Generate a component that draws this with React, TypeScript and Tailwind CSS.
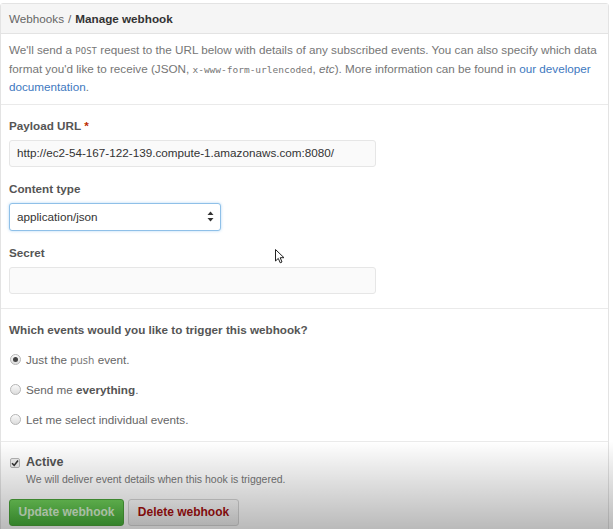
import React from "react";

function Radio({ checked }: { checked?: boolean }) {
  return (
    <span className="w-[11px] h-[11px] rounded-full border border-[#b5b5b5] bg-gradient-to-b from-[#fafafa] to-[#dcdcdc] flex items-center justify-center shrink-0">
      {checked && <span className="w-[5px] h-[5px] rounded-full bg-[#444]" />}
    </span>
  );
}

export default function App() {
  return (
    <div className="relative w-[613px] h-[529px] overflow-hidden bg-white font-['Liberation_Sans',Arial,sans-serif] text-[11.7px] text-[#333]">
      <div className="mt-[3px] w-[609px] border border-[#e3e3e3] rounded-[3px]">
        {/* Header */}
        <div className="h-[30px] flex items-center px-[8px] bg-[#f5f5f5] border-b border-[#e3e3e3]">
          <span className="text-[#666]">Webhooks</span>
          <span className="text-[#666] mx-[4px]">/</span>
          <span className="font-bold text-[#333]">Manage webhook</span>
        </div>

        {/* Intro */}
        <p className="px-[8px] pt-[7px] pb-[7px] leading-[18.5px] text-[#767676] border-b border-[#eaeaea]">
          We'll send a <code className="font-['DejaVu_Sans_Mono',monospace] text-[9px] leading-none uppercase">post</code> request
          to the URL below with details of any subscribed events. You can also specify which data format you'd like to receive
          (JSON, <code className="font-['DejaVu_Sans_Mono',monospace] text-[9.5px] leading-none">x-www-form-urlencoded</code>,{" "}
          <em>etc</em>). More information can be found in <span className="text-[#4078c0]">our developer documentation</span>.
        </p>

        {/* Form */}
        <div className="px-[8px] pt-[12px] pb-[14px] border-b border-[#eaeaea] flex flex-col">
          <label className="font-bold text-[#555] leading-[18px]">
            Payload URL <span className="text-[#bd2c00]">*</span>
          </label>
          <div className="mt-[5px] w-[367px] h-[27px] flex items-center px-[7px] bg-[#fafafa] border border-[#e6e6e6] rounded-[3px] text-[#333] whitespace-nowrap">
            http://ec2-54-167-122-139.compute-1.amazonaws.com:8080/
          </div>

          <label className="mt-[13px] font-bold text-[#555] leading-[18px]">Content type</label>
          <div className="mt-[5px] w-[212px] h-[28px] flex items-center justify-between pl-[7px] pr-[6px] bg-white border border-[#8fc0e8] rounded-[3px] shadow-[0_0_3px_rgba(81,167,232,0.45)] text-[#333]">
            <span>application/json</span>
            <svg width="7" height="11" viewBox="0 0 7 11">
              <path d="M3.5 0.5 L6.5 4 H0.5 Z" fill="#333" />
              <path d="M3.5 10.5 L6.5 7 H0.5 Z" fill="#333" />
            </svg>
          </div>

          <label className="mt-[13px] font-bold text-[#555] leading-[18px]">Secret</label>
          <div className="mt-[5px] w-[367px] h-[27px] bg-[#fafafa] border border-[#e6e6e6] rounded-[3px]" />
        </div>

        {/* Events */}
        <div className="px-[8px] pt-[12px] pb-[12px] border-b border-[#eaeaea] flex flex-col">
          <div className="font-bold text-[#555] leading-[18px]">Which events would you like to trigger this webhook?</div>
          <div className="mt-[12px] flex flex-col gap-[12px] text-[#666]">
            <div className="flex items-center gap-[5px] h-[18px] pl-[1px]">
              <Radio checked />
              <span>
                Just the <code className="font-['DejaVu_Sans',sans-serif] text-[10px] leading-none text-[#777]">push</code> event.
              </span>
            </div>
            <div className="flex items-center gap-[5px] h-[18px] pl-[1px]">
              <Radio />
              <span>
                Send me <b className="text-[#555]">everything</b>.
              </span>
            </div>
            <div className="flex items-center gap-[5px] h-[18px] pl-[1px]">
              <Radio />
              <span>Let me select individual events.</span>
            </div>
          </div>
        </div>

        {/* Active + actions */}
        <div className="px-[8px] pt-[12px] pb-[8px] flex flex-col">
          <div className="flex items-center gap-[6px] h-[18px] pl-[1px]">
            <span className="w-[10px] h-[10px] rounded-[2px] border border-[#b5b5b5] bg-[#eee] flex items-center justify-center">
              <svg width="8" height="8" viewBox="0 0 8 8">
                <path d="M1 4.2 L3.2 6.4 L7 1.5" stroke="#333" strokeWidth="1.6" fill="none" />
              </svg>
            </span>
            <span className="text-[12.5px] font-semibold text-[#555]">Active</span>
          </div>
          <div className="pl-[17px] text-[10.5px] text-[#777] leading-[14px]">
            We will deliver event details when this hook is triggered.
          </div>
          <div className="mt-[13px] flex gap-[4px]">
            <button className="h-[27px] w-[115px] rounded-[3px] border border-[#4aa339] bg-gradient-to-b from-[#6fd05a] to-[#47b03a] font-bold text-[12px] text-[#d9f2d2]">
              Update webhook
            </button>
            <button className="h-[27px] w-[111px] rounded-[3px] border border-[#d5d5d5] bg-gradient-to-b from-[#fcfcfc] to-[#eeeeee] font-bold text-[12px] text-[#a50f0f]">
              Delete webhook
            </button>
          </div>
        </div>
      </div>

      {/* video shadow at the bottom */}
      <div className="absolute left-0 right-0 bottom-0 h-[88px] pointer-events-none bg-gradient-to-b from-transparent to-[rgba(0,0,0,0.27)]" />

      {/* mouse cursor */}
      <svg className="absolute left-[275px] top-[249px]" width="11" height="16" viewBox="0 0 11 16">
        <path d="M0.5 0.5 L0.5 12 L3.3 9.4 L5.2 13.8 L7 13 L5.2 8.7 L9 8.7 Z" fill="#fff" stroke="#222" strokeWidth="1" />
      </svg>
    </div>
  );
}
